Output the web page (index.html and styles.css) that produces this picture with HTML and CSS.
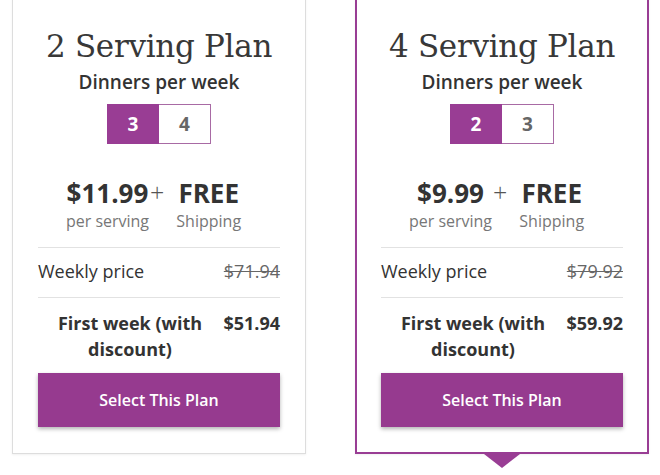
FILE: index.html
```html
<!DOCTYPE html>
<html lang="en">
<head>
  <meta charset="UTF-8" />
  <title>Plans</title>
  <link rel="stylesheet" href="styles.css">
</head>
<body>
  <div class="plans">
    <div class="plan">
      <h2>2 Serving Plan</h2>
      <div class="dinners">Dinners per week</div>
      <div class="toggle">
        <button class="on">3</button>
        <button>4</button>
      </div>
      <div class="price">
        <div class="col">
          <div class="big">$11.99</div>
          <div class="small">per serving</div>
        </div>
        <span class="plus">+</span>
        <div class="col">
          <div class="big">FREE</div>
          <div class="small">Shipping</div>
        </div>
      </div>
      <div class="row weekly">
        <span>Weekly price</span>
        <s>$71.94</s>
      </div>
      <div class="row first">
        <span class="label">First week (with discount)</span>
        <span>$51.94</span>
      </div>
      <button class="select">Select This Plan</button>
    </div>

    <div class="plan active">
      <h2>4 Serving Plan</h2>
      <div class="dinners">Dinners per week</div>
      <div class="toggle">
        <button class="on">2</button>
        <button>3</button>
      </div>
      <div class="price">
        <div class="col">
          <div class="big">$9.99</div>
          <div class="small">per serving</div>
        </div>
        <span class="plus">+</span>
        <div class="col">
          <div class="big">FREE</div>
          <div class="small">Shipping</div>
        </div>
      </div>
      <div class="row weekly">
        <span>Weekly price</span>
        <s>$79.92</s>
      </div>
      <div class="row first">
        <span class="label">First week (with discount)</span>
        <span>$59.92</span>
      </div>
      <button class="select">Select This Plan</button>
    </div>
  </div>
</body>
</html>
```

FILE: styles.css
```css
body {
  margin: 0;
  min-height: 475px;
  background: #fff;
  font-family: "Open Sans", sans-serif;
  color: #333;
}
.plans {
  display: flex;
  gap: 49px;
  padding: 0 11px 20px 12px;
  margin-top: -20px;
}
.plan {
  position: relative;
  flex: 1;
  border: 1px solid #ddd;
  box-shadow: 0 1px 2px rgba(0, 0, 0, 0.06);
  padding: 45px 25px 26px;
  text-align: center;
}
.plan.active {
  border: 2px solid #993d94;
  padding: 44px 24px 25px;
}
/* little arrow under the chosen plan */
.plan.active::after {
  content: "";
  position: absolute;
  left: 50%;
  bottom: -16px;
  margin-left: -18px;
  border-left: 18px solid transparent;
  border-right: 18px solid transparent;
  border-top: 14px solid #993d94;
}
h2 {
  margin: 0;
  font-family: "DejaVu Serif", serif;
  font-weight: normal;
  font-size: 31px;
  line-height: 40px;
  color: #383838;
  letter-spacing: -0.3px;
}
.dinners {
  font-weight: 600;
  font-size: 19px;
  line-height: 24px;
  margin-top: 4px;
}
.toggle {
  display: flex;
  justify-content: center;
  margin-top: 10px;
}
.toggle button {
  width: 52px;
  height: 40px;
  border: 1px solid #a86aa4;
  background: #fff;
  color: #666;
  font-family: "Open Sans", sans-serif;
  font-weight: 700;
  font-size: 19px;
  padding: 0;
}
.toggle button + button {
  border-left: none;
}
.toggle button.on {
  background: #993d94;
  border-color: #993d94;
  color: #fff;
}
.price {
  display: flex;
  justify-content: center;
  align-items: flex-start;
  margin-top: 34px;
  padding: 0 11px 15px 0;
  border-bottom: 1px solid #e2e2e2;
}
.price .big {
  font-weight: 700;
  font-size: 26px;
  line-height: 30px;
  color: #333;
}
.price .plus {
  font-weight: 300;
  font-size: 25px;
  line-height: 28px;
  color: #555;
  margin: 0 12px 0 1px;
}
.price .small {
  font-size: 16px;
  color: #777;
  line-height: 22px;
  margin-top: 2px;
}
.row {
  display: flex;
  justify-content: space-between;
  align-items: flex-start;
  text-align: left;
}
.weekly {
  font-size: 18px;
  line-height: 24px;
  padding: 11px 0 14px;
  border-bottom: 1px solid #e2e2e2;
}
.weekly s {
  color: #666;
}
.first {
  font-weight: 700;
  font-size: 18px;
  line-height: 26px;
  padding-top: 12px;
}
.first .label {
  flex: 0 0 184px;
  text-align: center;
}
.select {
  display: block;
  width: 100%;
  height: 54px;
  margin-top: 11px;
  border: none;
  background: #963a8f;
  color: #fff;
  font-family: "Open Sans", sans-serif;
  font-weight: 600;
  font-size: 16px;
  box-shadow: 0 2px 4px rgba(0, 0, 0, 0.3);
  cursor: pointer;
}
```
